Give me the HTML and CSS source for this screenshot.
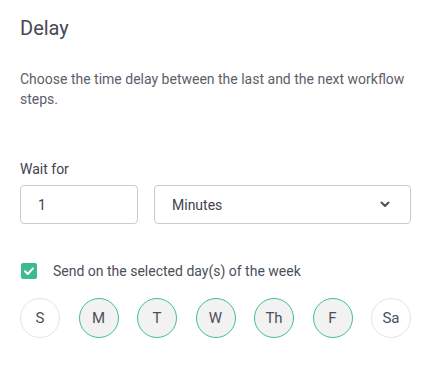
FILE: index.html
```html
<!DOCTYPE html>
<html>
<head>
<meta charset="utf-8">
<link rel="stylesheet" href="styles.css">
</head>
<body>
<div class="panel">
  <h1 class="title">Delay</h1>
  <p class="desc">Choose the time delay between the last and the next workflow steps.</p>
  <label class="label">Wait for</label>
  <div class="fields">
    <div class="field num">1</div>
    <div class="field select">
      <span>Minutes</span>
      <svg class="chev" width="10" height="7" viewBox="0 0 10 7"><path d="M1.5 1.5 L5 5 L8.5 1.5" fill="none" stroke="#4a4f5c" stroke-width="2" stroke-linecap="round" stroke-linejoin="round"/></svg>
    </div>
  </div>
  <div class="check-row">
    <span class="checkbox"><svg width="16" height="16" viewBox="0 0 16 16"><path d="M4 8.2 L6.8 11 L12 5.4" fill="none" stroke="#fff" stroke-width="2" stroke-linecap="round" stroke-linejoin="round"/></svg></span>
    <span class="check-label">Send on the selected day(s) of the week</span>
  </div>
  <div class="days">
    <span class="day">S</span>
    <span class="day on">M</span>
    <span class="day on">T</span>
    <span class="day on">W</span>
    <span class="day on">Th</span>
    <span class="day on">F</span>
    <span class="day">Sa</span>
  </div>
</div>
</body>
</html>
```
FILE: styles.css
```css
html, body {
  margin: 0;
  background: #fff;
}
body {
  font-family: Roboto, "Liberation Sans", sans-serif;
  color: #4a4f5c;
}
.panel {
  padding: 16px 19px 0 20px;
}
.title {
  margin: 0;
  font-size: 20px;
  line-height: 24px;
  font-weight: 400;
  color: #444955;
}
.desc {
  margin: 29px -14px 0 0;
  font-size: 14px;
  line-height: 20px;
  color: #5b606b;
}
.label {
  display: block;
  margin-top: 50px;
  font-size: 14px;
  line-height: 20px;
  color: #3f4450;
}
.fields {
  display: flex;
  gap: 16px;
  margin-top: 6px;
}
.field {
  box-sizing: border-box;
  height: 39px;
  border: 1px solid #c9cbcf;
  border-radius: 4px;
  display: flex;
  align-items: center;
  padding: 0 17px;
  font-size: 14px;
  color: #3f4450;
}
.num {
  width: 118px;
  flex: none;
}
.select {
  flex: 1;
  justify-content: space-between;
  padding-right: 20px;
}
.chev {
  display: block;
}
.check-row {
  display: flex;
  align-items: center;
  gap: 16px;
  margin-top: 37px;
  padding-left: 1px;
}
.checkbox {
  width: 16px;
  height: 16px;
  border-radius: 2px;
  background: #3dbb8c;
  display: block;
}
.checkbox svg {
  display: block;
}
.check-label {
  font-size: 14px;
  line-height: 20px;
  color: #4a4f5c;
}
.days {
  display: flex;
  justify-content: space-between;
  margin-top: 17px;
}
.day {
  box-sizing: border-box;
  width: 40px;
  height: 40px;
  border-radius: 50%;
  border: 1px solid #e3e3e3;
  background: #fff;
  display: flex;
  align-items: center;
  justify-content: center;
  font-size: 15px;
  color: #4a4f5c;
}
.day.on {
  border-color: #3fc08f;
  background: #f2f2f2;
}
```
